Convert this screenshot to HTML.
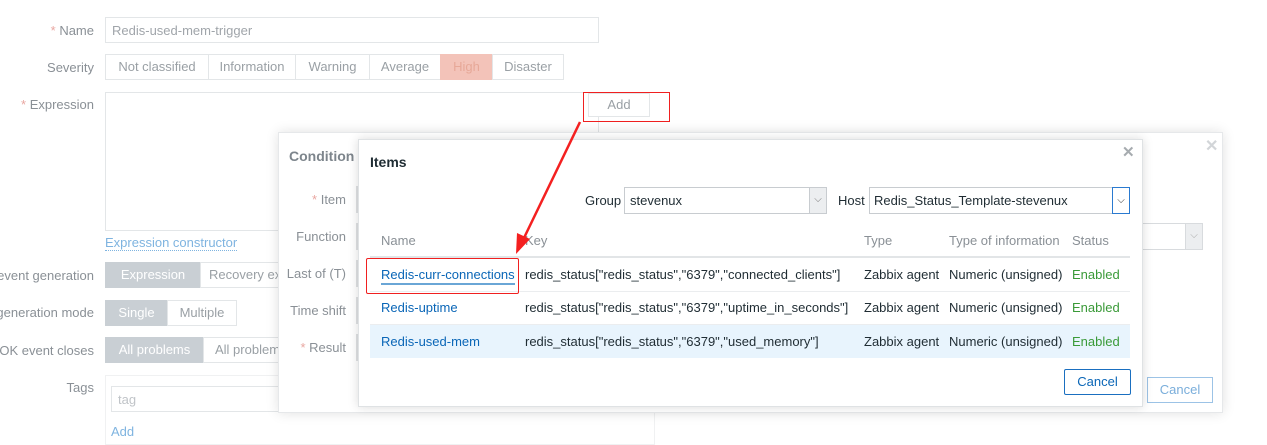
<!DOCTYPE html><html><head><style>
*{box-sizing:border-box;margin:0;padding:0}
body{width:1267px;height:435px;overflow:hidden;background:#fff;font-family:"Liberation Sans",sans-serif;font-size:13px;color:#8a9096;position:relative}
.a{position:absolute;white-space:nowrap}
.lbl{position:absolute;text-align:right;white-space:nowrap}
.st{color:#e9a6a0}
.box{position:absolute;border:1px solid #e3e6e8;background:#fff}
.seg{position:absolute;border:1px solid #e3e6e8;height:26px;line-height:24px;text-align:center;color:#9aa0a5;background:#fff}
.on{background:#c9cfd4;color:#fff;border-color:#c9cfd4}
.dk{color:#1f2c33}
.lk{color:#0a66b7}
.g{color:#3a9a38}
.stub{position:absolute;left:356px;width:2px;height:27px;background:#dfe2e4}
</style></head><body>
<div class="lbl" style="right:1173px;top:23px"><span class="st">* </span>Name</div>
<div class="box" style="left:105px;top:17px;width:494px;height:26px;padding:5px 6px;color:#a0a5aa">Redis-used-mem-trigger</div>
<div class="lbl" style="right:1173px;top:60px">Severity</div>
<div class="seg" style="left:105px;top:54px;width:104px">Not classified</div>
<div class="seg" style="left:208px;top:54px;width:88px">Information</div>
<div class="seg" style="left:295px;top:54px;width:75px">Warning</div>
<div class="seg" style="left:369px;top:54px;width:72px">Average</div>
<div class="seg" style="left:440px;top:54px;width:53px;background:#f3c3b9;border-color:#f3c3b9;color:#e7a898">High</div>
<div class="seg" style="left:492px;top:54px;width:72px">Disaster</div>
<div class="lbl" style="right:1173px;top:97px"><span class="st">* </span>Expression</div>
<div class="box" style="left:105px;top:92px;width:494px;height:139px"></div>
<div class="seg" style="left:588px;top:93px;width:62px;height:24px;line-height:22px">Add</div>
<div class="a" style="left:583px;top:92px;width:87px;height:30px;border:1px solid #f02020"></div>
<div class="a" style="left:105px;top:235px;color:#7fb4e0;border-bottom:1px dotted #7fb4e0">Expression constructor</div>
<div class="lbl" style="right:1173px;top:268px">event generation</div>
<div class="seg on" style="left:105px;top:262px;width:96px">Expression</div>
<div class="seg" style="left:200px;top:262px;width:90px;text-align:left;padding-left:8px">Recovery ex</div>
<div class="lbl" style="right:1173px;top:305px">generation mode</div>
<div class="seg on" style="left:105px;top:300px;width:63px">Single</div>
<div class="seg" style="left:167px;top:300px;width:70px">Multiple</div>
<div class="lbl" style="right:1173px;top:343px">OK event closes</div>
<div class="seg on" style="left:105px;top:337px;width:99px">All problems</div>
<div class="seg" style="left:203px;top:337px;width:90px;text-align:left;padding-left:11px">All problem</div>
<div class="lbl" style="right:1173px;top:380px">Tags</div>
<div class="box" style="left:105px;top:375px;width:550px;height:70px;border-color:#f0f1f2"></div>
<div class="box" style="left:111px;top:386px;width:200px;height:26px;padding:5px 6px;color:#c0c4c8">tag</div>
<div class="a" style="left:111px;top:424px;color:#7fb4e0">Add</div>

<!-- Condition dialog -->
<div class="a" style="left:278px;top:132px;width:945px;height:281px;background:#fff;border:1px solid #e6e8ea;box-shadow:0 0 12px rgba(0,0,0,.12)"></div>
<div class="a" style="left:289px;top:148px;font-weight:bold;font-size:14px;color:#7d858c">Condition</div>
<div class="a" style="left:1205px;top:136px;font-size:16px;color:#d2d5d8;font-weight:bold">✕</div>
<div class="lbl" style="right:921px;top:192px"><span class="st">* </span>Item</div>
<div class="lbl" style="right:921px;top:229px">Function</div>
<div class="lbl" style="right:921px;top:266px">Last of (T)</div>
<div class="lbl" style="right:921px;top:303px">Time shift</div>
<div class="lbl" style="right:921px;top:340px"><span class="st">* </span>Result</div>
<div class="stub" style="top:186px"></div>
<div class="stub" style="top:223px"></div>
<div class="stub" style="top:260px"></div>
<div class="stub" style="top:297px"></div>
<div class="stub" style="top:334px"></div>
<div class="box" style="left:1100px;top:223px;width:103px;height:27px;border-color:#d8dbde"></div>
<div class="a" style="left:1185px;top:224px;width:17px;height:25px;background:#eceef0;border-left:1px solid #d8dbde;color:#aaa;text-align:center;line-height:23px;font-size:10px">⌵</div>
<div class="a" style="left:1147px;top:377px;width:66px;height:26px;border:1px solid #9cc3e6;color:#7aaedb;text-align:center;line-height:24px">Cancel</div>

<!-- Items dialog -->
<div class="a" style="left:358px;top:139px;width:785px;height:268px;background:#fff;border:1px solid #dfe2e4;box-shadow:0 0 10px rgba(0,0,0,.15)"></div>
<div class="a dk" style="left:370px;top:154px;font-weight:bold;font-size:14px">Items</div>
<div class="a" style="left:1122px;top:143px;font-size:15px;color:#a6abaf;font-weight:bold">✕</div>
<div class="a dk" style="left:585px;top:193px">Group</div>
<div class="box" style="left:624px;top:187px;width:203px;height:27px;border-color:#c8ccd0;padding:5px 5px;color:#1f2c33">stevenux</div>
<div class="a" style="left:809px;top:188px;width:17px;height:25px;background:#eceef0;border-left:1px solid #c8ccd0;color:#777;text-align:center;line-height:23px;font-size:10px">⌵</div>
<div class="a dk" style="left:838px;top:193px">Host</div>
<div class="box" style="left:869px;top:187px;width:261px;height:27px;border-color:#c8ccd0;padding:5px 4px;color:#1f2c33">Redis_Status_Template-stevenux</div>
<div class="a" style="left:1112px;top:187px;width:18px;height:27px;border:1px solid #2a7ad0;background:#fff;color:#333;text-align:center;line-height:25px;font-size:10px">⌵</div>
<div class="a" style="left:381px;top:233px">Name</div>
<div class="a" style="left:525px;top:233px">Key</div>
<div class="a" style="left:864px;top:233px">Type</div>
<div class="a" style="left:949px;top:233px">Type of information</div>
<div class="a" style="left:1072px;top:233px">Status</div>
<div class="a" style="left:370px;top:256px;width:760px;height:2px;background:#e2e5e7"></div>
<div class="a" style="left:370px;top:291px;width:760px;height:1px;background:#ebedef"></div>
<div class="a" style="left:370px;top:324px;width:760px;height:1px;background:#ebedef"></div>
<div class="a" style="left:370px;top:325px;width:760px;height:33px;background:#e8f4fd"></div>
<div class="a lk" style="left:381px;top:267px;border-bottom:2px solid #6aa6d6;padding-bottom:1px">Redis-curr-connections</div>
<div class="a lk" style="left:381px;top:300px">Redis-uptime</div>
<div class="a lk" style="left:381px;top:334px">Redis-used-mem</div>
<div class="a dk" style="left:525px;top:267px">redis_status["redis_status","6379","connected_clients"]</div>
<div class="a dk" style="left:525px;top:300px">redis_status["redis_status","6379","uptime_in_seconds"]</div>
<div class="a dk" style="left:525px;top:334px">redis_status["redis_status","6379","used_memory"]</div>
<div class="a dk" style="left:864px;top:267px">Zabbix agent</div>
<div class="a dk" style="left:864px;top:300px">Zabbix agent</div>
<div class="a dk" style="left:864px;top:334px">Zabbix agent</div>
<div class="a dk" style="left:949px;top:267px">Numeric (unsigned)</div>
<div class="a dk" style="left:949px;top:300px">Numeric (unsigned)</div>
<div class="a dk" style="left:949px;top:334px">Numeric (unsigned)</div>
<div class="a g" style="left:1072px;top:267px">Enabled</div>
<div class="a g" style="left:1072px;top:300px">Enabled</div>
<div class="a g" style="left:1072px;top:334px">Enabled</div>
<div class="a" style="left:1064px;top:369px;width:67px;height:26px;border:1px solid #1a6fc0;border-radius:2px;color:#0a66b7;text-align:center;line-height:24px">Cancel</div>
<div class="a" style="left:366px;top:258px;width:153px;height:36px;border:1px solid #f02020;border-radius:2px"></div>
<svg class="a" style="left:0;top:0" width="1267" height="435"><line x1="580" y1="122" x2="523" y2="240" stroke="#f42020" stroke-width="2.5"/><polygon points="516,254 517,233 530,239" fill="#f42020"/></svg>
</body></html>
